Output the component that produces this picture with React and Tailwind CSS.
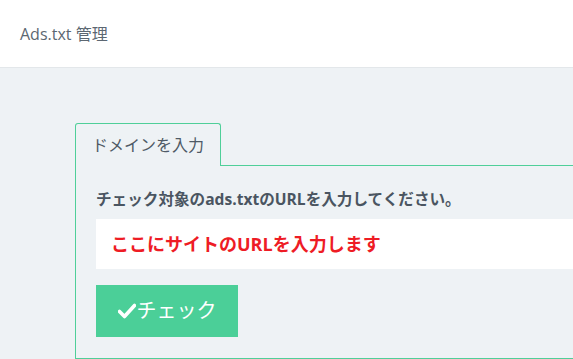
export default function App() {
  return (
    <div
      className="w-[573px] h-[359px] overflow-hidden bg-[#eef2f5]"
      style={{ fontFamily: '"Open Sans", "Noto Sans CJK JP", sans-serif' }}
    >
      <header className="h-[68px] bg-white border-b border-[#e3e7ea] flex items-center pl-[20px]">
        <span className="text-[16px] text-[#5c6772]">Ads.txt 管理</span>
      </header>
      <div className="pt-[55px] pl-[75px]">
        <div className="w-[620px]">
          <div className="flex">
            <div className="w-[146px] h-[43px] border border-b-0 border-[#4fcf99] rounded-t-[3px] bg-[#eef2f5] flex items-center pl-[16px] relative z-10 -mb-px">
              <span className="text-[16px] text-[#4f5a66]">ドメインを入力</span>
            </div>
          </div>
          <div className="border border-[#4fcf99] h-[194px] pl-[20px] pt-[22px]">
            <div className="text-[15.6px] font-bold text-[#4a5561] leading-[22px]">
              チェック対象のads.txtのURLを入力してください。
            </div>
            <div className="mt-[9px] h-[50px] bg-white flex items-center pl-[15px]">
              <span className="text-[18px] font-bold text-[#ee1c25]">ここにサイトのURLを入力します</span>
            </div>
            <button className="mt-[16px] w-[142px] h-[52px] bg-[#4bcf98] text-white text-[20px] flex items-center justify-center">
              <svg width="18" height="16" viewBox="0 0 18 16" className="mr-[1px]">
                <path d="M1.5 8.5 L6.5 13.5 L16.5 2.5" stroke="white" strokeWidth="3.6" fill="none" strokeLinecap="round" strokeLinejoin="round" />
              </svg>
              <span>チェック</span>
            </button>
          </div>
        </div>
      </div>
    </div>
  );
}
